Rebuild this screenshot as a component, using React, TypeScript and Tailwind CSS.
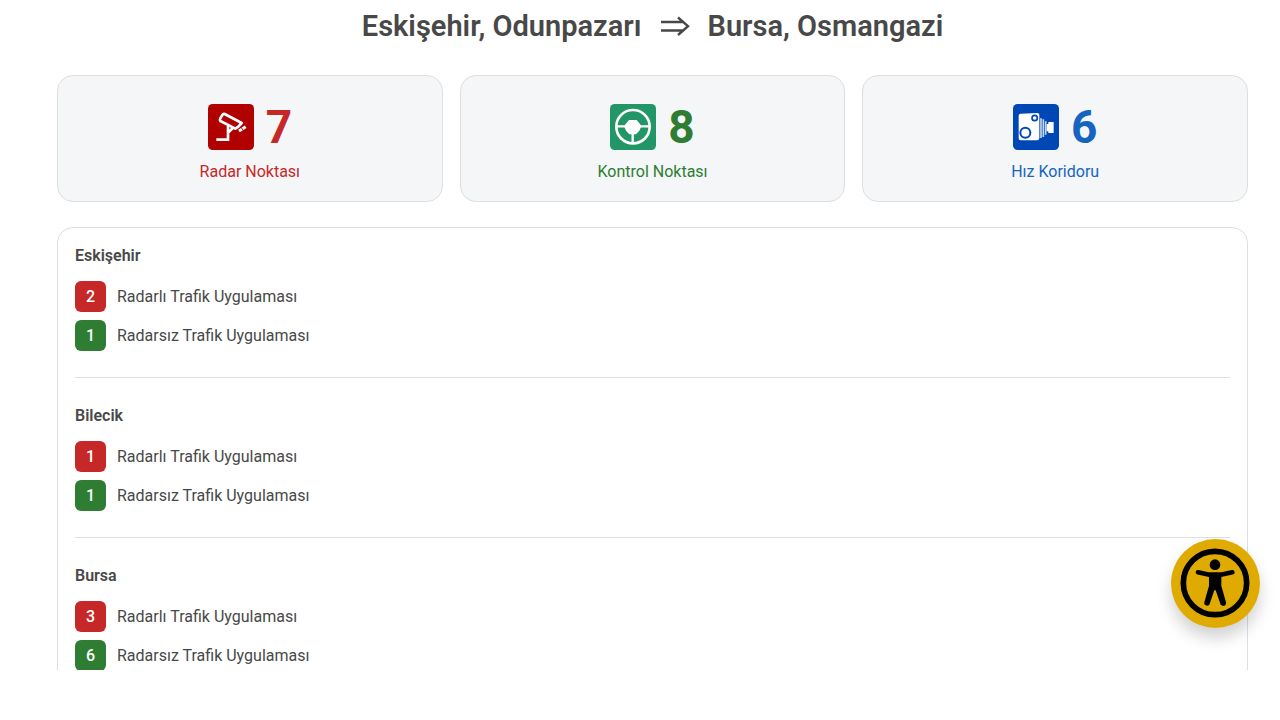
import type { ReactNode } from "react";

function CameraIcon() {
  return (
    <svg viewBox="0 0 138 138" className="size-[46px]" aria-hidden="true">
      <rect width="138" height="138" rx="14" fill="#b10000" />
      <path d="M50 30 101 57 91 68 82 74 37 51Q34 48 37 43L43 33Q46 28 50 30Z" fill="none" stroke="#fff" strokeWidth="8" strokeLinejoin="round" />
      <path d="M25 107H60V66M60 86 74 73" fill="none" stroke="#fff" strokeWidth="8" />
      <path d="M93 81 113 68" stroke="#fff" strokeWidth="9" />
      <path d="M98 69 106 79" stroke="#b10000" strokeWidth="3" />
    </svg>
  );
}

function WheelIcon() {
  return (
    <svg viewBox="0 0 138 138" className="size-[46px]" aria-hidden="true">
      <rect width="138" height="138" rx="14" fill="#229666" />
      <circle cx="69" cy="68" r="50" fill="none" stroke="#fff" strokeWidth="8" />
      <path d="M20 67H118M68 67V118" stroke="#fff" strokeWidth="7" />
      <path d="M57 48H80L90 60 94 67 88 80 78 91H58L48 80 42 67 47 60Z" fill="#fff" />
    </svg>
  );
}

function SpeedCameraIcon() {
  return (
    <svg viewBox="0 0 138 138" className="size-[46px]" aria-hidden="true">
      <rect width="138" height="138" rx="14" fill="#0047b6" />
      <path d="M23 29 73 27Q79 27 79 33V103Q79 108 73 109H23Q17 109 17 103V35Q17 29 23 29Z" fill="#fff" />
      <circle cx="65" cy="42" r="8" fill="#fff" stroke="#0047b6" strokeWidth="5" />
      <circle cx="37" cy="86" r="15" fill="#fff" stroke="#0047b6" strokeWidth="6" />
      <path d="M84 43V102M91 46V99M98 52V92" stroke="#c5d7f0" strokeWidth="5" />
      <path d="M101 60H106V54H122V87H106V82H101Z" fill="#fff" />
    </svg>
  );
}

function Stat({ icon, value, label, color }: { icon: ReactNode; value: number; label: string; color: string }) {
  return (
    <div className={`flex flex-1 flex-col items-center gap-2 rounded-2xl border border-[#dcdee0] bg-[#f4f6f8] px-4 pt-[26px] pb-[17px] ${color}`}>
      <div className="flex items-center gap-3">
        {icon}
        <span className="text-[46px] leading-[50px] font-bold">{value}</span>
      </div>
      <p className="text-base leading-6">{label}</p>
    </div>
  );
}

const cities = [
  { name: "Eskişehir", radar: 2, control: 1 },
  { name: "Bilecik", radar: 1, control: 1 },
  { name: "Bursa", radar: 3, control: 6 },
];

function Count({ value, label, color }: { value: number; label: string; color: string }) {
  return (
    <li className="flex items-center gap-[11px]">
      <span className={`flex size-[31px] items-center justify-center rounded-md font-medium text-white ${color}`}>{value}</span>
      <span>{label}</span>
    </li>
  );
}

export default function App() {
  return (
    <div className="flex h-screen flex-col bg-white pb-[50px] font-['Roboto',sans-serif] text-base text-[#484848]">
      <main className="min-h-0 flex-1 overflow-hidden pt-2 pr-8 pl-[57px]">
        <h1 className="flex items-center justify-center gap-[18px] text-[29px] leading-9 font-semibold">
          <span>Eskişehir, Odunpazarı</span>
          <svg viewBox="0 0 30 20" className="h-5 w-[30px]" fill="none" stroke="currentColor" strokeWidth="2.4" role="img" aria-label="→">
            <path d="M1 6H24M1 14.5H24M18 1.5 28 10.2 18 19" />
          </svg>
          <span>Bursa, Osmangazi</span>
        </h1>
        <section className="mt-[31px] flex gap-[17px]">
          <Stat icon={<CameraIcon />} value={7} label="Radar Noktası" color="text-[#c62828]" />
          <Stat icon={<WheelIcon />} value={8} label="Kontrol Noktası" color="text-[#2e7d32]" />
          <Stat icon={<SpeedCameraIcon />} value={6} label="Hız Koridoru" color="text-[#1565c0]" />
        </section>
        <section className="mt-[25px] rounded-2xl border border-[#dcdee0] px-[17px] py-4">
          {cities.map((city) => (
            <article key={city.name} className="mb-[26px] border-b border-[#e0e0e0] pb-[26px] last:border-0">
              <h2 className="mb-[13px] leading-6 font-semibold">{city.name}</h2>
              <ul className="flex flex-col gap-2">
                <Count value={city.radar} label="Radarlı Trafik Uygulaması" color="bg-[#c62828]" />
                <Count value={city.control} label="Radarsız Trafik Uygulaması" color="bg-[#2e7d32]" />
              </ul>
            </article>
          ))}
        </section>
      </main>
      <button
        type="button"
        aria-label="Erişilebilirlik"
        className="fixed right-5 bottom-[92px] size-[89px] rounded-full bg-[#e0ab00] shadow-[0_10px_16px_rgba(0,0,0,0.18)]"
      >
        <svg viewBox="0 0 267 267" className="size-full" aria-hidden="true">
          <circle cx="132" cy="132" r="95" fill="none" stroke="#000" strokeWidth="17" />
          <circle cx="132" cy="77" r="16" />
          <path d="M81 100 115 107H149L184 100" fill="none" stroke="#000" strokeWidth="14" strokeLinecap="round" strokeLinejoin="round" />
          <path d="M114 103H151V140L165 190Q166 201 156 201L149 197 134 154H130L115 197Q108 204 100 196V190L114 140Z" />
        </svg>
      </button>
    </div>
  );
}
